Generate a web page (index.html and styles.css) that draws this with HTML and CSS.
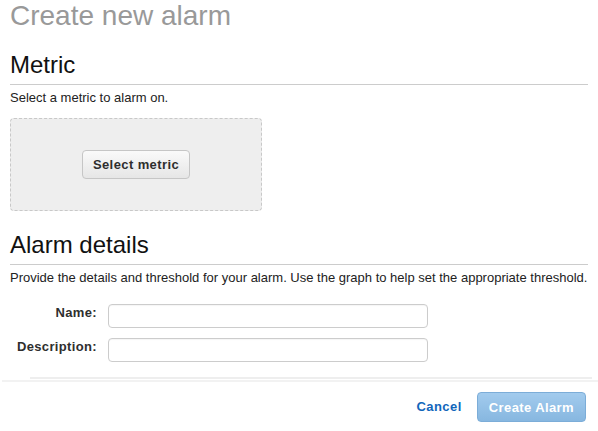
FILE: index.html
```html
<!DOCTYPE html>
<html lang="en">

<head>
  <meta charset="UTF-8">
  <title>Create new alarm</title>
  <link rel="stylesheet" href="styles.css">
</head>

<body>
  <div class="page">
    <h1 class="page-title">Create new alarm</h1>

    <section class="section">
      <h2 class="section-title">Metric</h2>
      <p class="section-help">Select a metric to alarm on.</p>
      <div class="metric-picker">
        <button class="btn" type="button">Select metric</button>
      </div>
    </section>

    <section class="section section-details">
      <h2 class="section-title">Alarm details</h2>
      <p class="section-help">Provide the details and threshold for your alarm. Use the graph to help set the appropriate threshold.</p>
      <div class="form-grid">
        <label class="form-label" for="alarm-name">Name:</label>
        <input class="form-input" id="alarm-name" type="text">
        <label class="form-label" for="alarm-desc">Description:</label>
        <input class="form-input" id="alarm-desc" type="text">
      </div>
    </section>
  </div>

  <!-- pie del dialogo -->
  <div class="divider"></div>
  <footer class="footer">
    <a class="link-cancel" href="#">Cancel</a>
    <button class="btn btn-primary" type="button" disabled>Create Alarm</button>
  </footer>
</body>

</html>
```

FILE: styles.css
```css
body {
  font-family: "Liberation Sans", Arial, sans-serif;
  font-size: 13px;
  line-height: 16px;
  color: #333;
  background: #fff;
  margin: 0;
  overflow: hidden;
}

.page {
  padding: 0 10px;
}

.page-title {
  margin: 0;
  font-size: 28px;
  line-height: 32px;
  font-weight: normal;
  color: #999;
}

.section-title {
  margin: 19px 0 0;
  padding-bottom: 5px;
  border-bottom: 1px solid #ccc;
  font-size: 24px;
  line-height: 28px;
  font-weight: normal;
  color: #111;
}

.section-details .section-title {
  margin-top: 20px;
}

.section-help {
  margin: 5px 0 0;
  color: #222;
}

.metric-picker {
  margin-top: 12px;
  width: 250px;
  height: 91px;
  background: #eee;
  border: 1px dashed #c8c8c8;
  border-radius: 4px;
  display: flex;
  align-items: center;
  justify-content: center;
}

.btn {
  font-family: inherit;
  font-size: 13px;
  font-weight: bold;
  letter-spacing: 0.4px;
  height: 29px;
  padding: 0 10px;
  color: #2e2e2e;
  background: linear-gradient(#fafafa, #e6e6e6);
  border: 1px solid #c6c6c6;
  border-radius: 4px;
}

.form-grid {
  margin-top: 18px;
  display: grid;
  grid-template-columns: 87px 320px;
  column-gap: 11px;
  row-gap: 10px;
}

.form-label {
  text-align: right;
  font-weight: bold;
  letter-spacing: 0.35px;
  padding-top: 1px;
  color: #2e2e2e;
}

.form-input {
  box-sizing: border-box;
  height: 24px;
  margin: 0;
  border: 1px solid #ccc;
  border-radius: 4px;
  box-shadow: inset 0 1px 1px rgba(0, 0, 0, 0.04);
  background: #fff;
}

.divider {
  margin: 15px 6px 0 30px;
  height: 2px;
  background: #eee;
}

.footer {
  margin: 1px 0 0 2px;
  border-top: 2px solid #f2f2f2;
  padding: 10px 12px 0 0;
  display: flex;
  justify-content: flex-end;
  align-items: center;
  gap: 15px;
}

.link-cancel {
  color: #1166bb;
  font-weight: bold;
  letter-spacing: 0.45px;
  text-decoration: none;
}

.btn-primary {
  height: 30px;
  padding: 0 11px;
  color: #fff;
  background: linear-gradient(#a2cbee, #87b7e0);
  border-color: #7cadd8;
}
```
